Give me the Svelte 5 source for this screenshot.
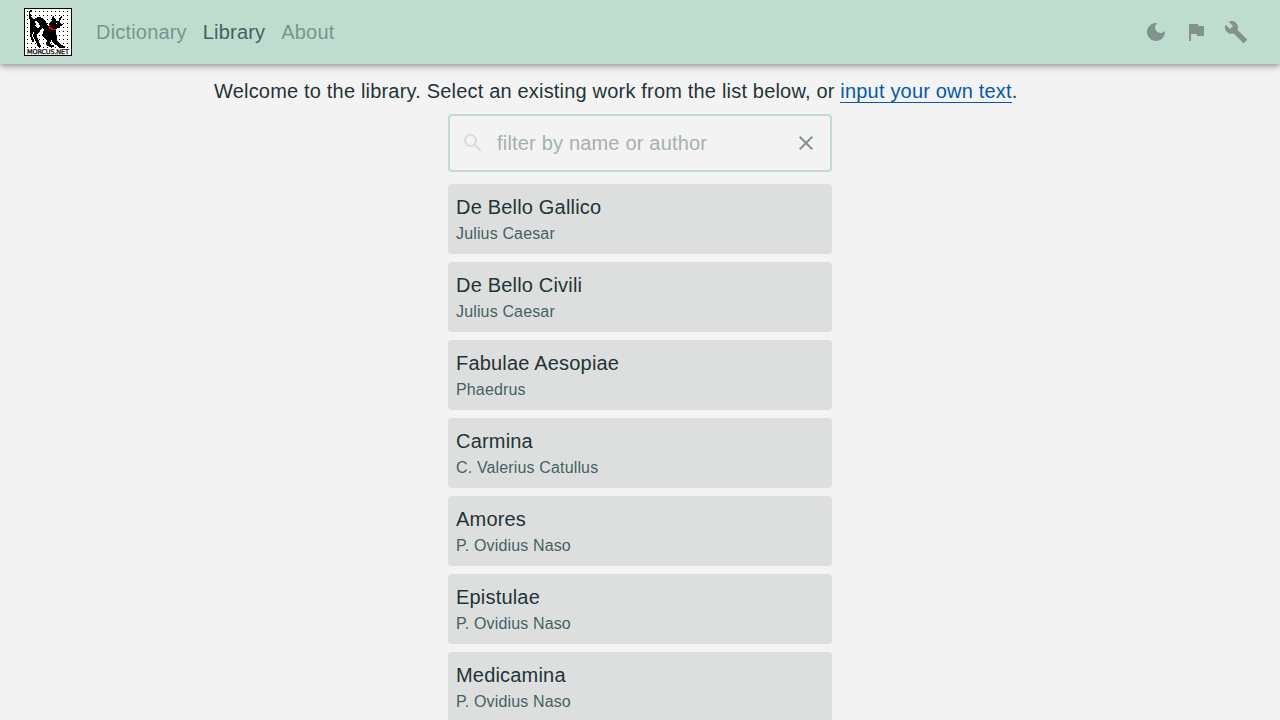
<script>
  const works = [
    ['De Bello Gallico', 'Julius Caesar'],
    ['De Bello Civili', 'Julius Caesar'],
    ['Fabulae Aesopiae', 'Phaedrus'],
    ['Carmina', 'C. Valerius Catullus'],
    ['Amores', 'P. Ovidius Naso'],
    ['Epistulae', 'P. Ovidius Naso'],
    ['Medicamina', 'P. Ovidius Naso'],
  ];

  // Pixel rows of the cat, starting at y = 2: pairs of start and end columns.
  const rows = [
    [6, 8], [5, 7], [5, 6], [5, 6], [5, 7], [5, 7], [5, 7, 29, 30, 37, 38],
    [5, 8, 13, 17, 28, 30, 36, 38], [5, 9, 11, 19, 28, 31, 35, 37], [6, 20, 28, 31, 35, 37],
    [6, 21, 28, 32, 35, 36], [6, 11, 13, 22, 27, 36], [6, 11, 14, 22, 26, 36],
    [6, 12, 15, 23, 25, 31, 33, 37], [6, 12, 15, 23, 25, 39], [6, 11, 16, 24, 25, 38],
    [6, 12, 16, 36], [6, 13, 15, 35], [6, 18, 19, 33], [6, 17, 20, 32], [6, 16, 20, 32],
    [6, 15, 19, 32], [6, 9, 10, 15, 19, 32], [6, 9, 10, 14, 19, 32], [6, 8, 9, 13, 18, 32],
    [6, 8, 9, 13, 18, 33], [6, 8, 9, 13, 19, 33], [7, 9, 10, 13, 20, 33], [7, 9, 10, 14, 21, 33],
    [7, 10, 11, 14, 22, 33], [8, 10, 11, 15, 23, 27, 28, 33], [8, 10, 12, 15, 23, 27, 28, 34],
    [12, 15, 22, 26, 29, 35], [13, 16, 22, 26, 30, 36], [13, 16, 22, 27, 31, 37],
    [13, 17, 23, 30, 33, 39], [14, 17, 25, 30, 34, 41], [35, 41],
  ];
  const cat = rows
    .map((row, i) => {
      let d = '';
      for (let k = 0; k < row.length; k += 2) d += `M${row[k]} ${i + 2}H${row[k + 1]}v1H${row[k]}z`;
      return d;
    })
    .join('');
</script>

<header>
  <svg class="logo" viewBox="0 0 48 48" shape-rendering="crispEdges" role="img">
    <defs>
      <pattern id="dots" x="3" y="3" width="4" height="4" patternUnits="userSpaceOnUse">
        <path d="M0 0h1v1H0z" />
      </pattern>
    </defs>
    <rect width="48" height="48" fill="#000" />
    <rect x="1" y="1" width="46" height="46" fill="#fff" />
    <rect x="2" y="2" width="44" height="38" fill="url(#dots)" />
    <path d={cat} />
    <path d="M25 17h1v2h1v1h2v1h3v1h-5v-1h-2z" fill="#f00" />
    <rect x="2" y="40" width="44" height="6" fill="#fff" />
    <text x="3" y="46" textLength="42" lengthAdjust="spacing">MORCUS.NET</text>
  </svg>
  <nav><a>Dictionary</a><a class="active">Library</a><a>About</a></nav>
  <div class="tools">
    <button aria-label="Dark mode"><svg viewBox="0 0 24 24"><path d="M12 3c-4.97 0-9 4.03-9 9s4.03 9 9 9 9-4.03 9-9c0-.46-.04-.92-.1-1.36-.98 1.37-2.58 2.26-4.4 2.26-2.98 0-5.4-2.42-5.4-5.4 0-1.81.89-3.42 2.26-4.4-.44-.06-.9-.1-1.36-.1z" /></svg></button>
    <button aria-label="Report"><svg viewBox="0 0 24 24"><path d="M14.4 6 14 4H5v17h2v-7h5.600l.4 2h7V6z" /></svg></button>
    <button aria-label="Settings"><svg viewBox="0 0 24 24"><path d="m22.700 19-9.100-9.100c.9-2.300.4-5-1.500-6.900-2-2-5-2.400-7.400-1.300L9 6 6 9 1.600 4.700C.4 7.100.9 10.100 2.900 12.100c1.900 1.900 4.600 2.400 6.900 1.500l9.100 9.100c.4.4 1 .4 1.400 0l2.300-2.300c.5-.4.5-1.100.1-1.400z" /></svg></button>
  </div>
</header>

<main>
  <p>Welcome to the library. Select an existing work from the list below, or <a class="link">input your own text</a>.</p>
  <div class="column">
    <div class="search">
      <svg class="glass" viewBox="0 0 24 24"><path d="M15.500 14h-.79l-.28-.27C15.410 12.590 16 11.110 16 9.500 16 5.910 13.090 3 9.500 3S3 5.910 3 9.500 5.910 16 9.500 16c1.610 0 3.090-.59 4.230-1.570l.27.28v.79l5 4.990L20.490 19l-4.990-5zm-6 0C7.010 14 5 11.990 5 9.500S7.010 5 9.500 5 14 7.010 14 9.500 11.990 14 9.500 14z" /></svg>
      <input placeholder="filter by name or author" />
      <svg class="clear" viewBox="0 0 24 24"><path d="M19 6.410 17.590 5 12 10.590 6.410 5 5 6.410 10.590 12 5 17.590 6.410 19 12 13.410 17.590 19 19 17.590 13.410 12z" /></svg>
    </div>
    {#each works as [title, author]}
      <div class="card">
        <div class="title">{title}</div>
        <div class="author">{author}</div>
      </div>
    {/each}
  </div>
</main>

<style>
  :global(body) { background: #f3f3f3; overflow: hidden; }
  :global(#app) { font-family: "Liberation Sans", Arial, sans-serif; font-size: 20px; letter-spacing: 0.00938em; color: #1f3339; }
  header {
    position: relative; display: flex; align-items: center; height: 64px; box-sizing: border-box; padding: 0 24px;
    background: #bfddcf;
    box-shadow: 0 2px 4px -1px rgba(0, 0, 0, 0.2), 0 4px 5px 0 rgba(0, 0, 0, 0.14), 0 1px 10px 0 rgba(0, 0, 0, 0.12);
  }
  .logo { width: 48px; height: 48px; display: block; }
  .logo text { font: 6.5px "DejaVu Sans", sans-serif; letter-spacing: 0; fill: #000; stroke: #000; stroke-width: 0.25px; }
  nav { display: flex; gap: 16px; margin-left: 24px; color: #7b9490; line-height: 24px; }
  .active { color: #455f65; }
  .tools { margin-left: auto; display: flex; }
  button { width: 40px; height: 40px; padding: 8px; border: 0; background: none; }
  button svg { width: 24px; height: 24px; display: block; fill: #83918f; }
  main { width: 852px; margin: 0 auto; padding-top: 12px; }
  p { margin: 0; line-height: 30px; }
  .link { color: #0659a9; border-bottom: 1px solid #0659a9; }
  .column { width: 384px; margin: 8px auto 0; display: flex; flex-direction: column; gap: 8px; }
  .search {
    display: flex; align-items: center; height: 58px; box-sizing: border-box; border: 2px solid #bfddcf;
    border-radius: 4px; padding: 0 12px 0 11px; margin-bottom: 4px;
  }
  .glass { width: 24px; height: 24px; fill: #d9dcdb; }
  input {
    flex: 1; min-width: 0; padding: 0; margin-left: 12px; border: 0; outline: 0; background: none;
    font: inherit; letter-spacing: inherit; color: #1f3339;
  }
  input::placeholder { color: #a5b0b3; opacity: 1; }
  .clear { width: 24px; height: 24px; fill: #83918f; }
  .card { height: 70px; box-sizing: border-box; padding: 8px; border-radius: 4px; background: #dddfde; }
  .title { line-height: 30px; }
  .author { font-size: 16px; line-height: 24px; letter-spacing: 0.00938em; color: #455f65; }
</style>
